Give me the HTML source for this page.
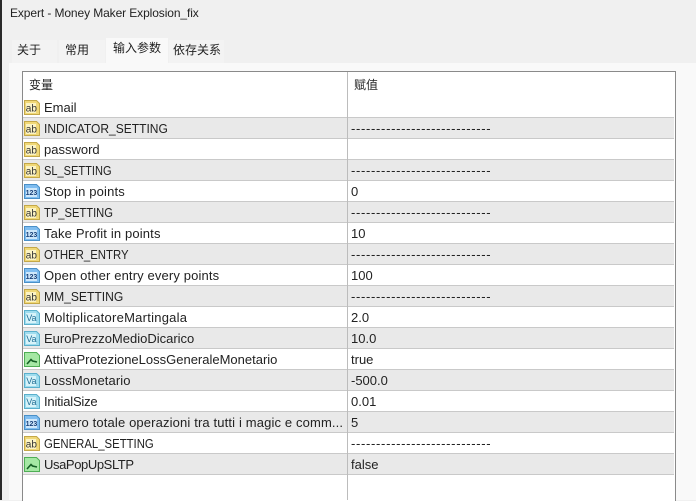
<!DOCTYPE html>
<html><head><meta charset="utf-8"><style>
html,body{margin:0;padding:0}
body{width:696px;height:500px;position:relative;overflow:hidden;background:#f0f0f0;font-family:"Liberation Sans","Noto Sans CJK SC",sans-serif;font-size:13px;color:#222}
.a{position:absolute;white-space:nowrap}
.tab{position:absolute;font-size:12px;line-height:20px}
.row{position:absolute;left:23px;width:651px;height:20px;border-bottom:1px solid #c9c9c9}
.row.g{background:#e9e9e9}
.row svg{position:absolute;left:0;top:0}
.n{position:absolute;left:21px;top:0;line-height:21px;white-space:nowrap;transform-origin:left center}
.v{position:absolute;left:328px;top:0;line-height:21px;white-space:nowrap}
.d{letter-spacing:.68px}
.sep{position:absolute;left:347px;top:72px;width:1px;height:428px;background:#bcbcbc}
</style></head><body>
<div class="a" style="left:0;top:0;width:2px;height:500px;background:#2a2a2a"></div>
<div class="a" style="left:10px;top:4px;line-height:18px;font-size:12px;letter-spacing:-.1px;color:#222">Expert - Money Maker Explosion_fix</div>
<div class="a" style="left:9px;top:63px;width:687px;height:437px;background:#f9f9f9"></div>
<div class="tab" style="left:12px;top:40px;width:40px;padding-left:5px;height:23px;background:#f3f3f3">关于</div>
<div class="tab" style="left:59px;top:40px;width:40px;padding-left:6px;height:23px;background:#f3f3f3">常用</div>
<div class="tab" style="left:106px;top:38px;width:55px;padding-left:7px;height:25px;background:#f9f9f9">输入参数</div>
<div class="tab" style="left:169px;top:40px;width:51px;padding-left:4px;height:23px;background:#f3f3f3">依存关系</div>
<div class="a" style="left:22px;top:71px;width:652px;height:429px;background:#fff;border:1px solid #8a8a8a;border-bottom:0"></div>
<div class="a" style="left:29px;top:76px;font-size:12px;line-height:18px">变量</div>
<div class="a" style="left:354px;top:76px;font-size:12px;line-height:18px">赋值</div>
<div class="row" style="top:97px"><svg width="20" height="20"><path d="M1.5 3.5h12l3 3v11h-15z" fill="#f0d878" stroke="#c4a848"/><rect x="3" y="6" width="10" height="10" fill="#fbf3c4"/><text x="2.8" y="14.5" font-size="10" font-family="Liberation Sans" fill="#333">ab</text></svg><span class="n">Email</span></div>
<div class="row g" style="top:118px"><svg width="20" height="20"><path d="M1.5 3.5h12l3 3v11h-15z" fill="#f0d878" stroke="#c4a848"/><rect x="3" y="6" width="10" height="10" fill="#fbf3c4"/><text x="2.8" y="14.5" font-size="10" font-family="Liberation Sans" fill="#333">ab</text></svg><span class="n" style="transform:scaleX(.925)">INDICATOR_SETTING</span><span class="v d">----------------------------</span></div>
<div class="row" style="top:139px"><svg width="20" height="20"><path d="M1.5 3.5h12l3 3v11h-15z" fill="#f0d878" stroke="#c4a848"/><rect x="3" y="6" width="10" height="10" fill="#fbf3c4"/><text x="2.8" y="14.5" font-size="10" font-family="Liberation Sans" fill="#333">ab</text></svg><span class="n">password</span></div>
<div class="row g" style="top:160px"><svg width="20" height="20"><path d="M1.5 3.5h12l3 3v11h-15z" fill="#f0d878" stroke="#c4a848"/><rect x="3" y="6" width="10" height="10" fill="#fbf3c4"/><text x="2.8" y="14.5" font-size="10" font-family="Liberation Sans" fill="#333">ab</text></svg><span class="n" style="transform:scaleX(.85)">SL_SETTING</span><span class="v d">----------------------------</span></div>
<div class="row" style="top:181px"><svg width="20" height="20"><path d="M1.5 3.5h12l3 3v11h-15z" fill="#7fbdf0" stroke="#4a90c8"/><rect x="3" y="7" width="11" height="9" fill="#cfe8fb"/><text x="2.6" y="14.2" font-size="7" font-weight="bold" font-family="Liberation Sans" fill="#173f78">123</text></svg><span class="n" style="letter-spacing:.15px">Stop in points</span><span class="v">0</span></div>
<div class="row g" style="top:202px"><svg width="20" height="20"><path d="M1.5 3.5h12l3 3v11h-15z" fill="#f0d878" stroke="#c4a848"/><rect x="3" y="6" width="10" height="10" fill="#fbf3c4"/><text x="2.8" y="14.5" font-size="10" font-family="Liberation Sans" fill="#333">ab</text></svg><span class="n" style="transform:scaleX(.86)">TP_SETTING</span><span class="v d">----------------------------</span></div>
<div class="row" style="top:223px"><svg width="20" height="20"><path d="M1.5 3.5h12l3 3v11h-15z" fill="#7fbdf0" stroke="#4a90c8"/><rect x="3" y="7" width="11" height="9" fill="#cfe8fb"/><text x="2.6" y="14.2" font-size="7" font-weight="bold" font-family="Liberation Sans" fill="#173f78">123</text></svg><span class="n" style="letter-spacing:.15px">Take Profit in points</span><span class="v">10</span></div>
<div class="row g" style="top:244px"><svg width="20" height="20"><path d="M1.5 3.5h12l3 3v11h-15z" fill="#f0d878" stroke="#c4a848"/><rect x="3" y="6" width="10" height="10" fill="#fbf3c4"/><text x="2.8" y="14.5" font-size="10" font-family="Liberation Sans" fill="#333">ab</text></svg><span class="n" style="transform:scaleX(.876)">OTHER_ENTRY</span><span class="v d">----------------------------</span></div>
<div class="row" style="top:265px"><svg width="20" height="20"><path d="M1.5 3.5h12l3 3v11h-15z" fill="#7fbdf0" stroke="#4a90c8"/><rect x="3" y="7" width="11" height="9" fill="#cfe8fb"/><text x="2.6" y="14.2" font-size="7" font-weight="bold" font-family="Liberation Sans" fill="#173f78">123</text></svg><span class="n" style="letter-spacing:.14px">Open other entry every points</span><span class="v">100</span></div>
<div class="row g" style="top:286px"><svg width="20" height="20"><path d="M1.5 3.5h12l3 3v11h-15z" fill="#f0d878" stroke="#c4a848"/><rect x="3" y="6" width="10" height="10" fill="#fbf3c4"/><text x="2.8" y="14.5" font-size="10" font-family="Liberation Sans" fill="#333">ab</text></svg><span class="n" style="transform:scaleX(.93)">MM_SETTING</span><span class="v d">----------------------------</span></div>
<div class="row" style="top:307px"><svg width="20" height="20"><path d="M1.5 3.5h12l3 3v11h-15z" fill="#9fdcee" stroke="#5ab0cc"/><rect x="3" y="6" width="10" height="10" fill="#d8f3f9"/><text x="3.2" y="14" font-size="9" font-family="Liberation Sans" fill="#1f6f96">Va</text></svg><span class="n" style="letter-spacing:.25px">MoltiplicatoreMartingala</span><span class="v">2.0</span></div>
<div class="row g" style="top:328px"><svg width="20" height="20"><path d="M1.5 3.5h12l3 3v11h-15z" fill="#9fdcee" stroke="#5ab0cc"/><rect x="3" y="6" width="10" height="10" fill="#d8f3f9"/><text x="3.2" y="14" font-size="9" font-family="Liberation Sans" fill="#1f6f96">Va</text></svg><span class="n">EuroPrezzoMedioDicarico</span><span class="v">10.0</span></div>
<div class="row" style="top:349px"><svg width="20" height="20"><path d="M1.5 3.5h12l3 3v11h-15z" fill="#a5e8a4" stroke="#4fae55"/><path d="M4 15l4-4.500 1.500 1.500 4.500 1" fill="none" stroke="#155f25" stroke-width="1.6"/></svg><span class="n">AttivaProtezioneLossGeneraleMonetario</span><span class="v">true</span></div>
<div class="row g" style="top:370px"><svg width="20" height="20"><path d="M1.5 3.5h12l3 3v11h-15z" fill="#9fdcee" stroke="#5ab0cc"/><rect x="3" y="6" width="10" height="10" fill="#d8f3f9"/><text x="3.2" y="14" font-size="9" font-family="Liberation Sans" fill="#1f6f96">Va</text></svg><span class="n" style="letter-spacing:.1px">LossMonetario</span><span class="v">-500.0</span></div>
<div class="row" style="top:391px"><svg width="20" height="20"><path d="M1.5 3.5h12l3 3v11h-15z" fill="#9fdcee" stroke="#5ab0cc"/><rect x="3" y="6" width="10" height="10" fill="#d8f3f9"/><text x="3.2" y="14" font-size="9" font-family="Liberation Sans" fill="#1f6f96">Va</text></svg><span class="n" style="letter-spacing:-.2px">InitialSize</span><span class="v">0.01</span></div>
<div class="row g" style="top:412px"><svg width="20" height="20"><path d="M1.5 3.5h12l3 3v11h-15z" fill="#7fbdf0" stroke="#4a90c8"/><rect x="3" y="7" width="11" height="9" fill="#cfe8fb"/><text x="2.6" y="14.2" font-size="7" font-weight="bold" font-family="Liberation Sans" fill="#173f78">123</text></svg><span class="n" style="letter-spacing:.14px">numero totale operazioni tra tutti i magic e comm...</span><span class="v">5</span></div>
<div class="row" style="top:433px"><svg width="20" height="20"><path d="M1.5 3.5h12l3 3v11h-15z" fill="#f0d878" stroke="#c4a848"/><rect x="3" y="6" width="10" height="10" fill="#fbf3c4"/><text x="2.8" y="14.5" font-size="10" font-family="Liberation Sans" fill="#333">ab</text></svg><span class="n" style="transform:scaleX(.873)">GENERAL_SETTING</span><span class="v d">----------------------------</span></div>
<div class="row g" style="top:454px"><svg width="20" height="20"><path d="M1.5 3.5h12l3 3v11h-15z" fill="#a5e8a4" stroke="#4fae55"/><path d="M4 15l4-4.500 1.500 1.500 4.500 1" fill="none" stroke="#155f25" stroke-width="1.6"/></svg><span class="n" style="letter-spacing:-.4px">UsaPopUpSLTP</span><span class="v">false</span></div>
<div class="sep"></div>
</body></html>
